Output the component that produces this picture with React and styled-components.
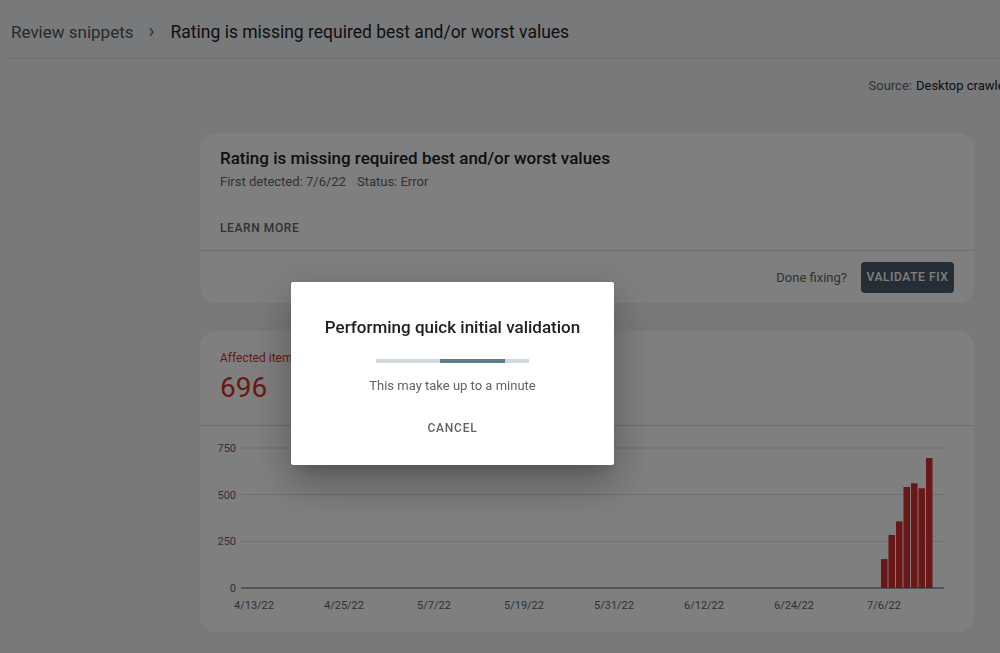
import React from "react"
import styled, { createGlobalStyle } from "styled-components"

const GlobalStyle = createGlobalStyle`
  html, body {
    margin: 0;
    padding: 0;
    background: #f1f3f4;
    font-family: Roboto, "Liberation Sans", Arial, sans-serif;
    overflow: hidden;
  }
`

const bars = [155, 284, 357, 541, 561, 534, 696]
const yTicks = [750, 500, 250, 0]
const xTicks = ["4/13/22", "4/25/22", "5/7/22", "5/19/22", "5/31/22", "6/12/22", "6/24/22", "7/6/22"]

const CHART_TOP = 22
const CHART_BASE = 162
const yFor = (v) => CHART_BASE - (v / 750) * (CHART_BASE - CHART_TOP)

const Chart = () => (
  <ChartSvg width="774" height="206" viewBox="0 0 774 206">
    {yTicks.map((t) => (
      <g key={t}>
        <line
          x1="41"
          x2="744"
          y1={yFor(t)}
          y2={yFor(t)}
          stroke={t === 0 ? "#80868b" : "#e0e0e0"}
          strokeWidth={t === 0 ? 1.5 : 1}
        />
        <text x="36" y={yFor(t) + 4} textAnchor="end" className="tick">
          {t}
        </text>
      </g>
    ))}
    {xTicks.map((t, i) => (
      <text key={t} x={54 + i * 90} y="183" textAnchor="middle" className="tick">
        {t}
      </text>
    ))}
    {bars.map((v, i) => (
      <rect
        key={i}
        x={681 + i * 7.5}
        y={yFor(v)}
        width="6.5"
        height={CHART_BASE - yFor(v)}
        fill="#d32f2f"
      />
    ))}
  </ChartSvg>
)

const App = () => {
  return (
    <>
      <GlobalStyle />
      <Page>
        <Header>
          <Crumb>Review snippets</Crumb>
          <Chevron>›</Chevron>
          <CrumbCurrent>Rating is missing required best and/or worst values</CrumbCurrent>
        </Header>
        <SourceRow>
          <span className="label">Source:</span>
          <span className="value">Desktop crawler</span>
        </SourceRow>
        <Main>
          <Card>
            <CardTop>
              <CardTitle>Rating is missing required best and/or worst values</CardTitle>
              <Meta>
                <span>First detected: 7/6/22</span>
                <span>Status: Error</span>
              </Meta>
              <TextButton>Learn more</TextButton>
            </CardTop>
            <CardFooter>
              <span>Done fixing?</span>
              <PrimaryButton>Validate fix</PrimaryButton>
            </CardFooter>
          </Card>
          <Card>
            <Stat>
              <StatLabel>Affected items</StatLabel>
              <StatValue>696</StatValue>
            </Stat>
            <Chart />
          </Card>
        </Main>
      </Page>
      <Scrim>
        <Dialog>
          <DialogTitle>Performing quick initial validation</DialogTitle>
          <Progress>
            <div className="bar" />
          </Progress>
          <DialogText>This may take up to a minute</DialogText>
          <DialogButton>Cancel</DialogButton>
        </Dialog>
      </Scrim>
    </>
  )
}

const Page = styled.div`
  width: 1000px;
  height: 653px;
  color: #202124;
`

const Header = styled.div`
  display: flex;
  align-items: center;
  box-sizing: border-box;
  height: 59px;
  padding: 6px 0 0 3px;
  margin-left: 8px;
  border-bottom: 1px solid #dadce0;
`

const Crumb = styled.span`
  font-size: 17px;
  color: #4f5357;
`

const Chevron = styled.span`
  color: #5f6368;
  margin: 0 16px 0 15px;
  font-size: 20px;
  line-height: 1;
  position: relative;
  top: -1px;
`

const CrumbCurrent = styled.span`
  font-size: 17.5px;
  color: #202124;
`

const SourceRow = styled.div`
  display: flex;
  justify-content: flex-end;
  gap: 4px;
  margin-right: -9px;
  padding-top: 19px;
  font-size: 13px;
  line-height: 16px;
  white-space: nowrap;
  .label {
    color: #5f6368;
  }
  .value {
    color: #202124;
  }
`

const Main = styled.div`
  padding: 39px 26px 0 200px;
  display: flex;
  flex-direction: column;
  gap: 28px;
`

const Card = styled.div`
  background: #fff;
  border-radius: 16px;
  overflow: hidden;
`

const CardTop = styled.div`
  padding: 15px 20px 14px;
  border-bottom: 1px solid #dadce0;
`

const CardTitle = styled.div`
  font-size: 17px;
  font-weight: 500;
  line-height: 20px;
  color: #202124;
`

const Meta = styled.div`
  display: flex;
  gap: 11px;
  margin-top: 6px;
  font-size: 13px;
  line-height: 16px;
  color: #5f6368;
`

const TextButton = styled.div`
  margin-top: 30px;
  font-size: 12px;
  line-height: 16px;
  font-weight: 500;
  letter-spacing: 0.6px;
  text-transform: uppercase;
  color: #5f6368;
`

const CardFooter = styled.div`
  display: flex;
  align-items: center;
  justify-content: flex-end;
  gap: 14px;
  height: 52px;
  padding-right: 20px;
  font-size: 13px;
  color: #5f6368;
`

const PrimaryButton = styled.div`
  display: flex;
  align-items: center;
  justify-content: center;
  width: 93px;
  height: 31px;
  border-radius: 4px;
  background: #4a5c6c;
  color: #fff;
  font-size: 12px;
  font-weight: 500;
  letter-spacing: 0.6px;
  text-transform: uppercase;
`

const Stat = styled.div`
  padding: 19px 20px 21px;
  border-bottom: 1px solid #dadce0;
`

const StatLabel = styled.div`
  font-size: 12px;
  line-height: 16px;
  color: #d93025;
`

const StatValue = styled.div`
  margin-top: 6px;
  font-size: 28px;
  line-height: 32px;
  color: #d93025;
`

const ChartSvg = styled.svg`
  display: block;
  .tick {
    font-family: Roboto, "Liberation Sans", Arial, sans-serif;
    font-size: 11px;
    fill: #5f6368;
  }
`

const Scrim = styled.div`
  position: fixed;
  inset: 0;
  background: rgba(0, 0, 0, 0.5);
`

const Dialog = styled.div`
  position: absolute;
  left: 291px;
  top: 282px;
  width: 323px;
  height: 183px;
  box-sizing: border-box;
  padding-top: 33px;
  background: #fff;
  border-radius: 2px;
  display: flex;
  flex-direction: column;
  align-items: center;
  box-shadow: 0 11px 15px -7px rgba(0, 0, 0, 0.2), 0 24px 38px 3px rgba(0, 0, 0, 0.14),
    0 9px 46px 8px rgba(0, 0, 0, 0.12);
`

const DialogTitle = styled.div`
  font-size: 17px;
  font-weight: 500;
  line-height: 24px;
  color: #202124;
`

const Progress = styled.div`
  position: relative;
  width: 153px;
  height: 4px;
  margin-top: 20px;
  background: #cfd8dc;
  .bar {
    position: absolute;
    left: 64px;
    top: 0;
    width: 65px;
    height: 100%;
    background: #607d8b;
  }
`

const DialogText = styled.div`
  margin-top: 15px;
  font-size: 13px;
  line-height: 16px;
  color: #5f6368;
`

const DialogButton = styled.div`
  margin-top: 16px;
  height: 36px;
  display: flex;
  align-items: center;
  padding: 0 8px;
  font-size: 12px;
  font-weight: 500;
  letter-spacing: 0.8px;
  text-transform: uppercase;
  color: #5f6368;
`

export default App
